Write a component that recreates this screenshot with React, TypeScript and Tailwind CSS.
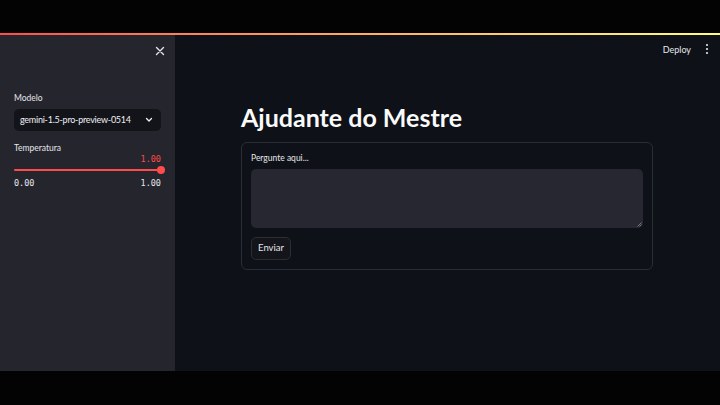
import React from "react";

export default function App() {
  return (
    <div className="w-[720px] h-[405px] bg-black flex flex-col overflow-hidden" style={{ fontFamily: 'Lato, "Noto Sans", sans-serif' }}>
      <div className="h-[33px] bg-[#030303] shrink-0" />
      <div className="h-[338px] flex flex-col shrink-0 relative">
        <div className="h-[2px] w-full bg-gradient-to-r from-[#ff4b4b] to-[#fffd80] absolute top-0 left-0 z-10" />
        <div className="flex flex-1">
          {/* Sidebar */}
          <div className="w-[175px] bg-[#24252d] flex flex-col px-[14px] pt-[10px]">
            <div className="flex justify-end pt-[2px]">
              <svg width="10" height="10" viewBox="0 0 10 10" className="mt-[1px] -mr-[4px]">
                <path d="M1.5 1.5 L8.5 8.5 M8.5 1.5 L1.5 8.5" stroke="#e6e6ea" strokeWidth="1.4" strokeLinecap="round" />
              </svg>
            </div>
            <div className="mt-[38px] text-[8.5px] text-[#e6e6ea] leading-none">Modelo</div>
            <div className="mt-[6px] h-[22px] rounded-[5px] bg-[#12141a] flex items-center justify-between pl-[6px] pr-[8px]">
              <span className="text-[9px] tracking-[-0.25px] text-[#f0f0f3] leading-none whitespace-nowrap">gemini-1.5-pro-preview-0514</span>
              <svg width="8" height="6" viewBox="0 0 8 6">
                <path d="M1.5 1.5 L4 4 L6.5 1.5" stroke="#f0f0f3" strokeWidth="1.3" fill="none" strokeLinecap="round" strokeLinejoin="round" />
              </svg>
            </div>
            <div className="mt-[13px] text-[8.5px] text-[#e6e6ea] leading-none">Temperatura</div>
            <div className="mt-[3px] flex justify-end">
              <span className="text-[8.5px] text-[#ff4b4b] leading-none" style={{ fontFamily: '"DejaVu Sans Mono", monospace' }}>1.00</span>
            </div>
            <div className="mt-[2px] relative h-[8px] flex items-center">
              <div className="h-[2px] w-full bg-[#ff4b4b] rounded" />
              <div className="absolute right-[-4px] w-[8px] h-[8px] rounded-full bg-[#ff4b4b]" />
            </div>
            <div className="mt-[5px] flex justify-between text-[8.5px] text-[#e6e6ea] leading-none" style={{ fontFamily: '"DejaVu Sans Mono", monospace' }}>
              <span>0.00</span>
              <span>1.00</span>
            </div>
          </div>
          {/* Main */}
          <div className="flex-1 bg-[#0e1117] flex flex-col">
            <div className="h-[28px] mt-[2px] flex items-center justify-end pr-[11px] gap-[14px]">
              <span className="text-[9px] text-[#e6e6ea] pt-[2px]">Deploy</span>
              <svg width="4" height="12" viewBox="0 0 4 12">
                <circle cx="2" cy="2" r="1.1" fill="#e6e6ea" />
                <circle cx="2" cy="6" r="1.1" fill="#e6e6ea" />
                <circle cx="2" cy="10" r="1.1" fill="#e6e6ea" />
              </svg>
            </div>
            <div className="pl-[66px] pr-[67px]">
              <h1 className="mt-[42px] text-[25px] font-bold text-[#fafafa] leading-none">Ajudante do Mestre</h1>
              <div className="mt-[12px] border border-[#2b2d34] rounded-[6px] px-[9px] pt-[11px] pb-[9px]">
                <div className="text-[8.5px] text-[#e6e6ea] leading-none">Pergunte aqui...</div>
                <div className="mt-[6px] h-[59px] rounded-[5px] bg-[#262730] relative">
                  <svg width="5" height="5" viewBox="0 0 5 5" className="absolute right-[1px] bottom-[1px]">
                    <path d="M4.5 0.5 L0.5 4.5 M4.5 2.5 L2.5 4.5" stroke="#8a8b92" strokeWidth="0.8" />
                  </svg>
                </div>
                <div className="mt-[9px] w-[40px] h-[23px] rounded-[5px] border border-[#2b2d34] bg-[#13151b] flex items-center justify-center">
                  <span className="text-[9.5px] text-[#e6e6ea] leading-none">Enviar</span>
                </div>
              </div>
            </div>
          </div>
        </div>
      </div>
      <div className="flex-1 bg-[#030303]" />
    </div>
  );
}
